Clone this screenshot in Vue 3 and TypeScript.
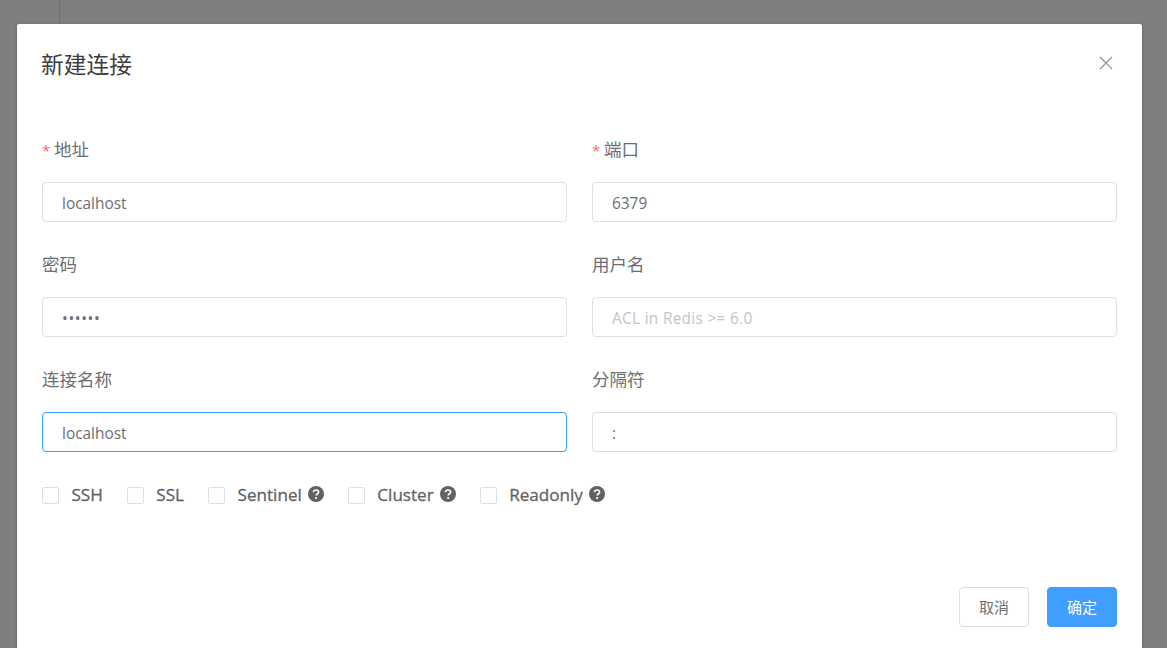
<script setup lang="ts">
interface Field { label: string; value?: string; placeholder?: string; required?: boolean; focused?: boolean; kind?: string }
const fields: Field[] = [
  { label: '地址', value: 'localhost', required: true },
  { label: '端口', value: '6379', required: true },
  { label: '密码', value: '••••••', kind: 'password' },
  { label: '用户名', placeholder: 'ACL in Redis >= 6.0' },
  { label: '连接名称', value: 'localhost', focused: true },
  { label: '分隔符', value: ':' }
]
const checks = [
  { label: 'SSH', help: false },
  { label: 'SSL', help: false },
  { label: 'Sentinel', help: true },
  { label: 'Cluster', help: true },
  { label: 'Readonly', help: true }
]
</script>

<template>
  <div class="page">
    <div class="backline"></div>
    <div class="overlay">
      <section class="dialog">
        <header class="head">
          <span class="title">新建连接</span>
          <svg class="close" width="14" height="14" viewBox="0 0 14 14" aria-label="close">
            <path d="M1 1 L13 13 M13 1 L1 13" stroke="#8f949c" stroke-width="1.2" fill="none" />
          </svg>
        </header>
        <div class="body">
          <div class="grid">
            <div v-for="f in fields" :key="f.label" class="item">
              <div class="label"><span v-if="f.required" class="star">*</span>{{ f.label }}</div>
              <div class="input" :class="{ focused: f.focused, ph: f.placeholder, pw: f.kind === 'password' }">
                {{ f.value || f.placeholder }}
              </div>
            </div>
          </div>
          <div class="checks">
            <label v-for="c in checks" :key="c.label" class="check">
              <span class="box"></span>
              <span class="text">{{ c.label }}</span>
              <svg v-if="c.help" class="help" width="16" height="16" viewBox="0 0 16 16">
                <circle cx="8" cy="8" r="8" fill="#606266" />
                <path d="M5.5 6.3 C5.5 4.8 6.6 4 8 4 C9.5 4 10.6 4.9 10.6 6.1 C10.6 7.7 8.2 7.8 8.2 9.6" stroke="#fff" stroke-width="1.7" fill="none" />
                <circle cx="8.1" cy="12" r="1.1" fill="#fff" />
              </svg>
            </label>
          </div>
        </div>
        <footer class="foot">
          <button class="btn">取消</button>
          <button class="btn primary">确定</button>
        </footer>
      </section>
    </div>
  </div>
</template>

<style>
html, body { margin: 0; height: 100%; overflow: hidden; background: #fff; }
</style>

<style scoped>
.page {
  height: 648px;
  overflow: hidden;
  position: relative;
  font-family: "Open Sans", "Noto Sans CJK SC", sans-serif;
}
.backline {
  position: absolute;
  left: 59px;
  top: 0;
  width: 1px;
  height: 100%;
  background: #dcdfe6;
}
.overlay {
  position: absolute;
  inset: 0;
  background: rgba(0, 0, 0, 0.5);
  overflow: hidden;
  padding: 24px 0 0 17px;
}
.dialog {
  width: 1125px;
  height: 700px;
  background: #fff;
  border-radius: 2px;
  box-shadow: 0 1px 3px rgba(0, 0, 0, 0.3);
  box-sizing: border-box;
}
.head {
  display: flex;
  justify-content: space-between;
  align-items: flex-start;
  padding: 24px 29px 0 24px;
  height: 90px;
  box-sizing: border-box;
}
.title {
  font-size: 22.75px;
  line-height: 34px;
  color: #3c3d40;
}
.close { margin: 8px 0 0; }
.body { padding: 19px 25px 0; }
.grid {
  display: grid;
  grid-template-columns: 525px 525px;
  column-gap: 25px;
  row-gap: 26px;
}
.label {
  height: 40px;
  line-height: 32px;
  font-size: 17.5px;
  color: #6c6e73;
  white-space: nowrap;
  margin-bottom: 9px;
  box-sizing: border-box;
}
.star {
  display: inline-block;
  width: 12px;
  font-size: 15px;
  color: #f56c6c;
}
.input {
  height: 40px;
  box-sizing: border-box;
  border: 1px solid #dcdfe6;
  border-radius: 4px;
  padding: 2px 19px 0;
  line-height: 38px;
  font-size: 15.4px;
  color: #6c6e73;
}
.input.focused { border-color: #409eff; }
.input.ph { color: #c0c4cc; letter-spacing: 0.3px; }
.input.pw { letter-spacing: 0.6px; }
.checks {
  display: flex;
  align-items: center;
  height: 40px;
  margin-top: 23px;
  gap: 24px;
}
.check {
  display: flex;
  align-items: center;
  font-size: 17.1px;
  font-weight: 500;
  color: #606266;
  -webkit-text-stroke: 0.3px #606266;
}
.text { position: relative; top: -1px; }
.box {
  width: 17px;
  height: 17px;
  box-sizing: border-box;
  border: 1px solid #dcdfe6;
  border-radius: 2px;
  margin-right: 12.5px;
}
.help { margin-left: 6px; position: relative; top: -1px; }
.foot {
  display: flex;
  justify-content: flex-end;
  gap: 18px;
  padding: 72px 25px 0;
}
.btn {
  width: 70px;
  height: 40px;
  box-sizing: border-box;
  border: 1px solid #dcdfe6;
  border-radius: 4px;
  background: #fff;
  color: #6c6e73;
  font: 15px "Open Sans", "Noto Sans CJK SC", sans-serif;
  padding: 0 0 2px;
}
.btn.primary {
  background: #409eff;
  border-color: #409eff;
  color: #fff;
}
</style>
